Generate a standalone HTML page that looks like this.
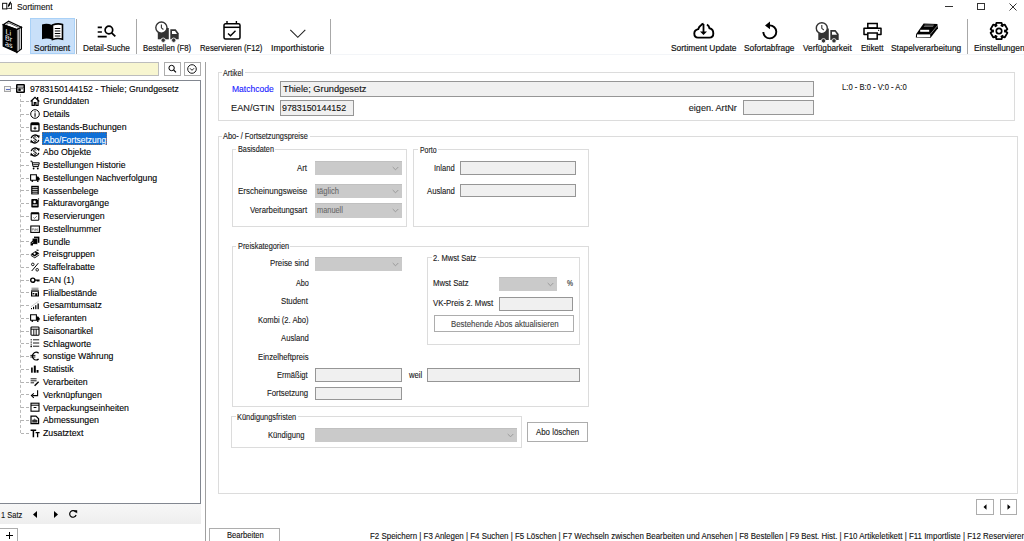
<!DOCTYPE html>
<html><head><meta charset="utf-8">
<style>
*{margin:0;padding:0;box-sizing:border-box}
html,body{width:1024px;height:541px;overflow:hidden;background:#fff}
body{position:relative;font-family:"Liberation Sans",sans-serif;color:#000}
.a{position:absolute}
.t{position:absolute;white-space:nowrap;line-height:1;-webkit-text-stroke:0.12px currentColor}
.sep{position:absolute;width:1px;background:#a8a8a8}
.gb{position:absolute;border:1px solid #dcdcdc}
.lg{position:absolute;background:#fff;white-space:nowrap;line-height:1;padding:0 1px;font-size:8.4px;letter-spacing:-0.35px}
.tb{position:absolute;background:#f0f0f0;border:1px solid #969696}
.cb{position:absolute;background:#cacaca;border-top:1px solid #c0c0c0}
.cb svg{position:absolute;right:3px;top:50%;margin-top:-2.5px}
.lb{position:absolute;white-space:nowrap;line-height:1;font-size:8.6px;letter-spacing:-0.3px;color:#1a1a1a}
.r{text-align:right}
.btn{position:absolute;border:1px solid #adadad;background:#fff}
.tl{position:absolute;font-size:8.3px;white-space:nowrap;line-height:1;color:#222}
.tree .it{position:absolute;left:43px;font-size:8.8px;white-space:nowrap;line-height:1;letter-spacing:-0.1px;color:#000}
.ic{position:absolute;left:29.5px;width:10px;height:10px}
.dh{position:absolute;left:21px;width:8px;height:0;border-top:1px dashed #b4b4b4}
</style></head><body>

<!-- title bar -->
<svg class="a" style="left:0;top:0" width="16" height="12" viewBox="0 0 16 12"><rect x="2.6" y="3.3" width="4.2" height="5.6" fill="none" stroke="#111" stroke-width="1"/><path d="M6.8 9.2Q7.3 8.3 8.2 8.4H11.5M11.5 3.2V9.3" fill="none" stroke="#222" stroke-width="0.9"/><path d="M7.9 7.2Q7.7 3.6 10.9 1.2Q11.5 4.9 7.9 7.2Z" fill="#000"/></svg>
<div class="a" style="left:945px;top:6px;width:8px;height:1px;background:#333"></div>
<div class="a" style="left:977px;top:3px;width:8px;height:7px;border:1px solid #333"></div>
<svg class="a" style="left:1009px;top:3px" width="8" height="8" viewBox="0 0 8 8"><path d="M0.5 0.5L7.5 7.5M7.5 0.5L0.5 7.5" stroke="#333" stroke-width="1"/></svg>

<!-- toolbar -->
<svg class="a" style="left:2px;top:20px" width="22" height="34" viewBox="0 0 22 34">
<path d="M1.2 4.7L6.6 1.2L19.4 7.2L14.9 9.6Z" fill="#fff" stroke="#000" stroke-width="1.3"/>
<path d="M4.5 4.3L7 2.9L16.5 7.3" fill="none" stroke="#444" stroke-width="0.9"/>
<path d="M1.2 4.7L14.9 9.6L14.9 32.4L1.2 26.1Z" fill="#000" stroke="#000" stroke-width="1.2"/>
<path d="M14.9 9.6L19.4 7.2L19.4 29L14.9 32.4Z" fill="#fff" stroke="#000" stroke-width="1.2"/>
<path d="M17.2 9.2L17.2 30.2" stroke="#000" stroke-width="0.9"/>
<g transform="matrix(1,0.358,0,1,0,0)" font-family="Liberation Sans" font-size="7.2" fill="#fff" style="-webkit-text-stroke:0.3px #fff">
<text x="3.4" y="12.6">Li</text>
<text x="3" y="18.6">Br</text>
<text x="3" y="24.6">as</text>
</g>
</svg>
<div class="a" style="left:30px;top:18px;width:45px;height:36px;background:#c9e0f9;border:1px solid #a9d1f7"></div>
<svg class="a" style="left:41px;top:23px" width="23" height="18" viewBox="0 0 23 18">
<path d="M1 1.5Q6 0 11 2L11 16.5Q6 14.8 1 16.2Z" fill="#000"/>
<path d="M11.5 2Q16.5 0 21.5 1.5L21.5 16.2Q16.5 14.8 11.5 16.5Z" fill="#fff" stroke="#000" stroke-width="1.6"/>
<path d="M13.8 5.5h5.5M13.8 8h5.5M13.8 10.5h5.5M13.8 13h5.5" stroke="#000" stroke-width="1.2"/>
</svg>
<div class="sep" style="left:76px;top:19px;height:35px"></div>

<svg class="a" style="left:96px;top:24px" width="22" height="15" viewBox="0 0 22 15">
<path d="M1.7 3.3h4.2M1.7 8h4.2M1.7 12.7h9" stroke="#000" stroke-width="1.7"/>
<circle cx="12.9" cy="6" r="3.8" fill="none" stroke="#000" stroke-width="1.7"/>
<path d="M15.6 8.8L19.3 12.4" stroke="#000" stroke-width="1.8"/>
</svg>
<div class="sep" style="left:136px;top:19px;height:35px"></div>

<svg class="a" style="left:154px;top:20px" width="28" height="24" viewBox="0 0 28 24">
<rect x="3.8" y="8" width="11" height="11.3" fill="#333"/>
<path d="M16.3 9.3h5.4l3 4v6h-8.4z" fill="#333"/>
<path d="M18 11h3l2 3h-5z" fill="#fff"/>
<circle cx="7.4" cy="7.6" r="5.6" fill="#fff" stroke="#333" stroke-width="1.4"/>
<path d="M7.4 4.5v3.3l2 1.7" fill="none" stroke="#333" stroke-width="1.1"/>
<circle cx="9.2" cy="20.2" r="2.2" fill="#333" stroke="#fff" stroke-width="0.8"/>
<circle cx="19.7" cy="20.2" r="2.2" fill="#333" stroke="#fff" stroke-width="0.8"/>
</svg>

<svg class="a" style="left:222px;top:20px" width="20" height="21" viewBox="0 0 20 21">
<rect x="2" y="3.8" width="16" height="15.3" rx="1.5" fill="none" stroke="#000" stroke-width="1.5"/>
<path d="M2 7.3h16" stroke="#000" stroke-width="1.5"/>
<path d="M5 1v3M14.4 1v3" stroke="#000" stroke-width="1.4"/>
<path d="M6 13.5l2.5 2.2l5-5" fill="none" stroke="#000" stroke-width="1.4"/>
</svg>

<svg class="a" style="left:289px;top:28px" width="18" height="11" viewBox="0 0 18 11">
<path d="M1.3 1.8L8.8 9.3L16.3 1.8" fill="none" stroke="#222" stroke-width="1.1"/>
</svg>
<div class="sep" style="left:330px;top:19px;height:35px"></div>

<svg class="a" style="left:692px;top:22px" width="24" height="18" viewBox="0 0 24 18">
<path d="M9 3.5Q10 1.8 11.5 1.8L11.5 1.8 M15 2.5Q17.2 4 17.5 6.3Q21.3 7 21.3 11.5Q21.3 15.6 17.5 15.6L6 15.6Q2.3 15.6 2.3 11.5Q2.3 7.8 6.3 7.1Q7 4.5 9 3.2" fill="none" stroke="#000" stroke-width="1.9"/>
<path d="M11.5 2v9" stroke="#000" stroke-width="1.8"/>
<path d="M8 9.5l3.5 3.5l3.5-3.5z" fill="#000"/>
</svg>

<svg class="a" style="left:760px;top:20px" width="20" height="21" viewBox="0 0 20 21">
<path d="M3.3 12A6.5 6.5 0 1 0 9.7 5.4L8.5 5.4" fill="none" stroke="#000" stroke-width="1.9"/>
<path d="M5 5.4L10 1.5L10 9.3Z" fill="#000"/>
</svg>

<svg class="a" style="left:814px;top:20px" width="28" height="24" viewBox="0 0 28 24">
<rect x="4.3" y="8.5" width="10.5" height="11.5" fill="#333"/>
<path d="M16.3 10h5.2l3.2 4v6h-8.4z" fill="#333"/>
<path d="M18 11.7h3l2 3h-5z" fill="#fff"/>
<circle cx="7.8" cy="8.2" r="5.5" fill="#fff" stroke="#333" stroke-width="1.4"/>
<path d="M7.8 5v3.3l2 1.7" fill="none" stroke="#333" stroke-width="1.1"/>
<circle cx="9.5" cy="20.8" r="2.2" fill="#333" stroke="#fff" stroke-width="0.8"/>
<circle cx="20" cy="20.8" r="2.2" fill="#333" stroke="#fff" stroke-width="0.8"/>
</svg>

<svg class="a" style="left:862px;top:22px" width="21" height="18" viewBox="0 0 21 18">
<rect x="5.8" y="1.5" width="9.4" height="4.5" fill="none" stroke="#000" stroke-width="1.5"/>
<path d="M5.5 12.6H2V6.3h17v6.3h-3.5" fill="none" stroke="#000" stroke-width="1.5" stroke-linejoin="round"/>
<rect x="5.8" y="11" width="9.4" height="6" fill="#fff" stroke="#000" stroke-width="1.5"/>
<rect x="16" y="7.8" width="1.2" height="1" fill="#000"/>
</svg>

<svg class="a" style="left:915px;top:22px" width="24" height="17" viewBox="0 0 24 17">
<path d="M0.8 15.6L1.2 12L8.6 1.6L22.4 2L23 6.2L15.6 15.8Z" fill="#000"/>
<rect x="2" y="12.4" width="13.2" height="2.7" fill="#fff"/>
<path d="M5.2 7.8H14.2V9.8H5.2Z" fill="#fff"/>
<path d="M9.6 3.1h9.2M8.9 4.4h9.2" stroke="#9a9a9a" stroke-width="0.7"/>
<path d="M15.3 12.2L22.6 3.5" stroke="#fff" stroke-width="0.5"/>
</svg>
<div class="sep" style="left:967px;top:19px;height:35px"></div>

<svg class="a" style="left:989px;top:21px" width="20" height="20" viewBox="-10 -10 20 20"><path d="M-3.58 -4.81 L-2.54 -8.22 L2.54 -8.22 L3.58 -4.81 L2.38 -5.51 L5.84 -6.31 L8.39 -1.91 L5.96 0.70 L5.96 -0.70 L8.39 1.91 L5.84 6.31 L2.38 5.51 L3.58 4.81 L2.54 8.22 L-2.54 8.22 L-3.58 4.81 L-2.38 5.51 L-5.84 6.31 L-8.39 1.91 L-5.96 -0.70 L-5.96 0.70 L-8.39 -1.91 L-5.84 -6.31 L-2.38 -5.51Z" fill="none" stroke="#000" stroke-width="1.8" stroke-linejoin="round"/><circle cx="0" cy="0" r="2.7" fill="none" stroke="#000" stroke-width="1.7"/></svg>
<div class="a" style="left:0;top:54px;width:1024px;height:1px;background:#f3f5f8"></div>

<div class="t" style="left:16.70px;top:2.55px;font-size:9.0px;color:#111;transform:scaleX(0.9228);transform-origin:0 0;">Sortiment</div>
<div class="t" style="left:34.00px;top:43.52px;font-size:8.8px;color:#111;transform:scaleX(0.9607);transform-origin:0 0;-webkit-text-stroke:0.18px #111;">Sortiment</div>
<div class="t" style="left:83.30px;top:43.52px;font-size:8.8px;color:#111;transform:scaleX(0.9312);transform-origin:0 0;-webkit-text-stroke:0.18px #111;">Detail-Suche</div>
<div class="t" style="left:143.40px;top:43.52px;font-size:8.8px;color:#111;transform:scaleX(0.8791);transform-origin:0 0;-webkit-text-stroke:0.18px #111;">Bestellen (F8)</div>
<div class="t" style="left:200.00px;top:43.52px;font-size:8.8px;color:#111;transform:scaleX(0.8808);transform-origin:0 0;-webkit-text-stroke:0.18px #111;">Reservieren (F12)</div>
<div class="t" style="left:270.90px;top:43.52px;font-size:8.8px;color:#111;transform:scaleX(0.9945);transform-origin:0 0;-webkit-text-stroke:0.18px #111;">Importhistorie</div>
<div class="t" style="left:670.50px;top:43.52px;font-size:8.8px;color:#111;transform:scaleX(0.9568);transform-origin:0 0;-webkit-text-stroke:0.18px #111;">Sortiment Update</div>
<div class="t" style="left:744.30px;top:43.52px;font-size:8.8px;color:#111;transform:scaleX(0.9473);transform-origin:0 0;-webkit-text-stroke:0.18px #111;">Sofortabfrage</div>
<div class="t" style="left:803.00px;top:43.52px;font-size:8.8px;color:#111;transform:scaleX(0.9391);transform-origin:0 0;-webkit-text-stroke:0.18px #111;">Verfügbarkeit</div>
<div class="t" style="left:860.80px;top:43.52px;font-size:8.8px;color:#111;transform:scaleX(0.9160);transform-origin:0 0;-webkit-text-stroke:0.18px #111;">Etikett</div>
<div class="t" style="left:891.10px;top:43.52px;font-size:8.8px;color:#111;transform:scaleX(0.9506);transform-origin:0 0;-webkit-text-stroke:0.18px #111;">Stapelverarbeitung</div>
<div class="t" style="left:973.90px;top:43.52px;font-size:8.8px;color:#111;transform:scaleX(0.9579);transform-origin:0 0;-webkit-text-stroke:0.18px #111;">Einstellungen</div>
<!-- left panel -->
<div class="a" style="left:-2px;top:62px;width:161px;height:14px;background:#f8f6d0;border:1px solid #bdbdbd;border-left:none"></div>
<div class="a" style="left:164px;top:62px;width:17px;height:14px;background:#fff;border:1px solid #adadad"></div>
<svg class="a" style="left:167px;top:64px" width="11" height="10" viewBox="0 0 11 10"><circle cx="4.6" cy="4" r="2.7" fill="none" stroke="#000" stroke-width="1"/><path d="M6.6 6l2.4 2.4" stroke="#000" stroke-width="1.1"/></svg>
<div class="a" style="left:183.5px;top:62px;width:17px;height:14px;background:#fff;border:1px solid #adadad"></div>
<svg class="a" style="left:186px;top:63px" width="12" height="12" viewBox="0 0 12 12"><circle cx="6" cy="6" r="4.3" fill="none" stroke="#000" stroke-width="0.9"/><path d="M4 5.3l2 2l2-2" fill="none" stroke="#000" stroke-width="0.9"/></svg>
<div class="a" style="left:-1px;top:80px;width:202px;height:424px;border:1px solid #828790;background:#fff"></div>
<div class="a" style="left:4px;top:86px;width:7px;height:6px;border:1px solid #a5a5a5;background:linear-gradient(#fafafa,#e8e8e8)"></div><div class="a" style="left:5.5px;top:88.5px;width:4px;height:1px;background:#5b6fc0"></div>
<div class="a" style="left:11px;top:88px;width:5px;height:0;border-top:1px dashed #c0c0c0"></div>
<svg class="a" style="left:16px;top:83.5px" width="9" height="9" viewBox="0 0 9 9"><rect x="0" y="0" width="9" height="9" rx="1.2" fill="#000"/><rect x="1.5" y="1.5" width="6" height="1.2" fill="#fff"/><rect x="1.5" y="3.5" width="6" height="4" fill="#fff"/><rect x="2.3" y="4.3" width="2.5" height="2.6" fill="#000"/><rect x="5.3" y="4.3" width="1.5" height="1" fill="#000"/></svg>
<div class="t" style="left:29.80px;top:84.11px;font-size:9.4px;color:#000;transform:scaleX(0.9276);transform-origin:0 0;">9783150144152 - Thiele; Grundgesetz</div>
<div class="a" style="left:20px;top:94px;width:0;height:339px;border-left:1px dashed #bcbcbc"></div>
<div class="dh" style="top:101.0px"></div>
<svg class="ic" style="top:96.0px" viewBox="0 0 10 10"><path d="M0.7 5.5L5 1.4L9.3 5.5" stroke="#000" stroke-width="1.3" fill="none"/><path d="M2.1 4.6V9.4H4.3V6.6H5.9V9.4H8.1V4.6" stroke="#000" stroke-width="1.2" fill="none"/><rect x="7" y="1" width="1.3" height="3.2" fill="#000"/></svg>
<div class="t" style="left:43.10px;top:96.41px;font-size:9.4px;color:#000;transform:scaleX(0.9320);transform-origin:0 0;">Grunddaten</div>
<div class="dh" style="top:113.8px"></div>
<svg class="ic" style="top:108.8px" viewBox="0 0 10 10"><circle cx="5" cy="5" r="4.3" fill="none" stroke="#000" stroke-width="1"/><rect x="4.5" y="4.2" width="1.1" height="3.6" fill="#000"/><rect x="4.5" y="2.3" width="1.1" height="1.1" fill="#000"/></svg>
<div class="t" style="left:43.10px;top:109.16px;font-size:9.4px;color:#000;transform:scaleX(0.9320);transform-origin:0 0;">Details</div>
<div class="dh" style="top:126.5px"></div>
<svg class="ic" style="top:121.5px" viewBox="0 0 10 10"><rect x="1" y="1" width="8" height="8.2" rx="1" fill="none" stroke="#000" stroke-width="1.3"/><rect x="1" y="1" width="8" height="2.2" fill="#000"/><path d="M3.5 6.2h3M5 4.7v3" stroke="#000" stroke-width="1"/></svg>
<div class="t" style="left:43.10px;top:121.92px;font-size:9.4px;color:#000;transform:scaleX(0.9320);transform-origin:0 0;">Bestands-Buchungen</div>
<div class="dh" style="top:139.3px"></div>
<svg class="ic" style="top:134.3px" viewBox="0 0 10 10"><path d="M1.2 4.2A4 4 0 0 1 8.3 2.6" fill="none" stroke="#000" stroke-width="1.3"/><path d="M8.8 5.8A4 4 0 0 1 1.7 7.4" fill="none" stroke="#000" stroke-width="1.3"/><path d="M6.6 1.2L9.8 1.4L9 4.4Z" fill="#000"/><path d="M3.4 8.8L0.2 8.6L1 5.6Z" fill="#000"/><path d="M6.3 3.3Q5.5 2.6 4.6 2.8Q3.4 3.1 3.6 4.2Q3.8 5 5 5.1Q6.4 5.3 6.4 6.3Q6.3 7.4 5 7.3Q4 7.2 3.5 6.6" fill="none" stroke="#000" stroke-width="1"/></svg>
<div class="a" style="left:42px;top:131.9px;width:65px;height:13px;background:#0f6fd6;border:1px dotted #8a6f60"></div>
<div class="t" style="left:43.50px;top:134.67px;font-size:9.4px;color:#fff;transform:scaleX(0.9041);transform-origin:0 0;">Abo/Fortsetzung</div>
<div class="dh" style="top:152.0px"></div>
<svg class="ic" style="top:147.0px" viewBox="0 0 10 10"><path d="M1.2 4.2A4 4 0 0 1 8.3 2.6" fill="none" stroke="#000" stroke-width="1.3"/><path d="M8.8 5.8A4 4 0 0 1 1.7 7.4" fill="none" stroke="#000" stroke-width="1.3"/><path d="M6.6 1.2L9.8 1.4L9 4.4Z" fill="#000"/><path d="M3.4 8.8L0.2 8.6L1 5.6Z" fill="#000"/><path d="M6.3 3.3Q5.5 2.6 4.6 2.8Q3.4 3.1 3.6 4.2Q3.8 5 5 5.1Q6.4 5.3 6.4 6.3Q6.3 7.4 5 7.3Q4 7.2 3.5 6.6" fill="none" stroke="#000" stroke-width="1"/></svg>
<div class="t" style="left:43.10px;top:147.43px;font-size:9.4px;color:#000;transform:scaleX(0.9320);transform-origin:0 0;">Abo Objekte</div>
<div class="dh" style="top:164.8px"></div>
<svg class="ic" style="top:159.8px" viewBox="0 0 10 10"><path d="M0.5 1.2H2L3 6.6H8.4L9.3 2.8H2.4" fill="none" stroke="#000" stroke-width="1"/><path d="M3.2 4.7H8.6" stroke="#000" stroke-width="0.9"/><circle cx="3.6" cy="8.5" r="0.9" fill="#000"/><circle cx="7.8" cy="8.5" r="0.9" fill="#000"/></svg>
<div class="t" style="left:43.10px;top:160.18px;font-size:9.4px;color:#000;transform:scaleX(0.9320);transform-origin:0 0;">Bestellungen Historie</div>
<div class="dh" style="top:177.5px"></div>
<svg class="ic" style="top:172.5px" viewBox="0 0 10 10"><path d="M0.6 1.8H6.4V7.2H0.6Z" fill="none" stroke="#000" stroke-width="1.1"/><path d="M6.4 3.4H8.2L9.6 5.3V7.2H6.4Z" fill="#000"/><circle cx="2.3" cy="8" r="0.9" fill="#000"/><circle cx="7.8" cy="8" r="0.9" fill="#000"/></svg>
<div class="t" style="left:43.10px;top:172.93px;font-size:9.4px;color:#000;transform:scaleX(0.9320);transform-origin:0 0;">Bestellungen Nachverfolgung</div>
<div class="dh" style="top:190.3px"></div>
<svg class="ic" style="top:185.3px" viewBox="0 0 10 10"><rect x="1.2" y="0.8" width="7.6" height="8.6" fill="#000"/><path d="M2.4 2.7h5.2M2.4 4.5h5.2M2.4 6.3h5.2M2.4 8.1h5.2" stroke="#fff" stroke-width="0.8"/></svg>
<div class="t" style="left:43.10px;top:185.69px;font-size:9.4px;color:#000;transform:scaleX(0.9320);transform-origin:0 0;">Kassenbelege</div>
<div class="dh" style="top:203.0px"></div>
<svg class="ic" style="top:198.0px" viewBox="0 0 10 10"><rect x="1.3" y="1" width="7.4" height="8.6" rx="0.8" fill="#000"/><circle cx="4.6" cy="3.9" r="1.3" fill="#fff"/><rect x="2.7" y="6.4" width="4.6" height="1.2" fill="#fff"/><rect x="7.4" y="0" width="2" height="2" fill="#fff"/><rect x="7.9" y="0.4" width="1.2" height="1.2" fill="#000"/></svg>
<div class="t" style="left:43.10px;top:198.44px;font-size:9.4px;color:#000;transform:scaleX(0.9320);transform-origin:0 0;">Fakturavorgänge</div>
<div class="dh" style="top:215.8px"></div>
<svg class="ic" style="top:210.8px" viewBox="0 0 10 10"><rect x="1.2" y="1.8" width="7.6" height="7.4" rx="0.8" fill="none" stroke="#000" stroke-width="1.1"/><rect x="1.2" y="1.8" width="7.6" height="1.5" fill="#000"/><path d="M3.4 6.4l1.2 1l2.3-2.3" fill="none" stroke="#555" stroke-width="0.8"/></svg>
<div class="t" style="left:43.10px;top:211.20px;font-size:9.4px;color:#000;transform:scaleX(0.9320);transform-origin:0 0;">Reservierungen</div>
<div class="dh" style="top:228.5px"></div>
<svg class="ic" style="top:223.5px" viewBox="0 0 10 10"><rect x="0.8" y="2" width="8.6" height="6.4" fill="none" stroke="#000" stroke-width="1.1"/><path d="M2.3 4.3v2.2M3.3 4.3l1 2.2M5.2 4.3v2.2l1-1l1 1V4.3" fill="none" stroke="#333" stroke-width="0.6"/></svg>
<div class="t" style="left:43.10px;top:223.95px;font-size:9.4px;color:#000;transform:scaleX(0.9320);transform-origin:0 0;">Bestellnummer</div>
<div class="dh" style="top:241.3px"></div>
<svg class="ic" style="top:236.3px" viewBox="0 0 10 10"><rect x="4" y="0.6" width="5.4" height="6.2" fill="#000"/><rect x="2.2" y="2.2" width="5.4" height="6" fill="#000" stroke="#fff" stroke-width="0.5"/><path d="M0.6 6.3L3 4.4V9.4H0.6Z" fill="#000"/><path d="M1.6 7.2l1.8-1.2" stroke="#fff" stroke-width="0.6"/></svg>
<div class="t" style="left:43.10px;top:236.70px;font-size:9.4px;color:#000;transform:scaleX(0.9320);transform-origin:0 0;">Bundle</div>
<div class="dh" style="top:254.0px"></div>
<svg class="ic" style="top:249.0px" viewBox="0 0 10 10"><path d="M0.6 5.2L5.5 2L9.4 4.2L4.8 7.5Z" fill="#000"/><path d="M0.8 6.3L4.8 8.8L9.2 5.8" fill="none" stroke="#000" stroke-width="0.9"/><circle cx="4.6" cy="4.6" r="1.1" fill="#fff"/><path d="M6.5 1L8.5 1.3" stroke="#000" stroke-width="1.2"/></svg>
<div class="t" style="left:43.10px;top:249.46px;font-size:9.4px;color:#000;transform:scaleX(0.9320);transform-origin:0 0;">Preisgruppen</div>
<div class="dh" style="top:266.8px"></div>
<svg class="ic" style="top:261.8px" viewBox="0 0 10 10"><circle cx="2.8" cy="2.4" r="1.3" fill="none" stroke="#000" stroke-width="0.9"/><circle cx="7.2" cy="7.8" r="1.3" fill="none" stroke="#000" stroke-width="0.9"/><path d="M8.3 1.2L1.7 9" stroke="#000" stroke-width="1"/></svg>
<div class="t" style="left:43.10px;top:262.21px;font-size:9.4px;color:#000;transform:scaleX(0.9320);transform-origin:0 0;">Staffelrabatte</div>
<div class="dh" style="top:279.6px"></div>
<svg class="ic" style="top:274.6px" viewBox="0 0 10 10"><circle cx="2.8" cy="5.2" r="2.1" fill="none" stroke="#000" stroke-width="1.4"/><path d="M4.8 5.2H9.6M7.4 5.2V6.6M8.8 5.2V6.6" stroke="#000" stroke-width="1.3"/></svg>
<div class="t" style="left:43.10px;top:274.97px;font-size:9.4px;color:#000;transform:scaleX(0.9320);transform-origin:0 0;">EAN (1)</div>
<div class="dh" style="top:292.3px"></div>
<svg class="ic" style="top:287.3px" viewBox="0 0 10 10"><path d="M1.5 1.2h7M1.5 2.4h7" stroke="#555" stroke-width="0.7"/><rect x="1" y="3.4" width="8" height="1.3" fill="#000"/><path d="M1.6 4.7V9H8.4V4.7" fill="none" stroke="#000" stroke-width="1.2"/><rect x="5.2" y="6.2" width="2" height="2.8" fill="#000"/><rect x="2.6" y="6" width="1.8" height="1.4" fill="#000"/></svg>
<div class="t" style="left:43.10px;top:287.72px;font-size:9.4px;color:#000;transform:scaleX(0.9320);transform-origin:0 0;">Filialbestände</div>
<div class="dh" style="top:305.1px"></div>
<svg class="ic" style="top:300.1px" viewBox="0 0 10 10"><rect x="1" y="8" width="1" height="1.2" fill="#000"/><rect x="3" y="6.8" width="1.1" height="2.4" fill="#000"/><rect x="5.2" y="5.2" width="1.2" height="4" fill="#000"/><rect x="7.5" y="3.5" width="1.3" height="5.7" fill="#000"/><path d="M0.8 6.8L8.6 1.2" stroke="#999" stroke-width="0.5"/></svg>
<div class="t" style="left:43.10px;top:300.47px;font-size:9.4px;color:#000;transform:scaleX(0.9320);transform-origin:0 0;">Gesamtumsatz</div>
<div class="dh" style="top:317.8px"></div>
<svg class="ic" style="top:312.8px" viewBox="0 0 10 10"><path d="M0.6 1.8H6.4V7.2H0.6Z" fill="none" stroke="#000" stroke-width="1.1"/><path d="M6.4 3.4H8.2L9.6 5.3V7.2H6.4Z" fill="#000"/><circle cx="2.3" cy="8" r="0.9" fill="#000"/><circle cx="7.8" cy="8" r="0.9" fill="#000"/></svg>
<div class="t" style="left:43.10px;top:313.23px;font-size:9.4px;color:#000;transform:scaleX(0.9320);transform-origin:0 0;">Lieferanten</div>
<div class="dh" style="top:330.6px"></div>
<svg class="ic" style="top:325.6px" viewBox="0 0 10 10"><rect x="1" y="1" width="8" height="8.2" rx="0.8" fill="none" stroke="#000" stroke-width="1.1"/><path d="M1 3.2h8M3.8 3.2v6M6.2 3.2v6" stroke="#000" stroke-width="0.9"/></svg>
<div class="t" style="left:43.10px;top:325.98px;font-size:9.4px;color:#000;transform:scaleX(0.9320);transform-origin:0 0;">Saisonartikel</div>
<div class="dh" style="top:343.3px"></div>
<svg class="ic" style="top:338.3px" viewBox="0 0 10 10"><path d="M1.2 1v7.8" stroke="#000" stroke-width="0.9" stroke-dasharray="1 0.6"/><path d="M3 1.8h6.2M3 5h6.2M3 8.2h6.2" stroke="#000" stroke-width="0.9"/><rect x="0.5" y="8" width="1.4" height="1.2" fill="#000"/></svg>
<div class="t" style="left:43.10px;top:338.74px;font-size:9.4px;color:#000;transform:scaleX(0.9320);transform-origin:0 0;">Schlagworte</div>
<div class="dh" style="top:356.1px"></div>
<svg class="ic" style="top:351.1px" viewBox="0 0 10 10"><path d="M8.6 2.2A3.6 3.9 0 1 0 8.6 8" fill="none" stroke="#000" stroke-width="1.2"/><path d="M0.4 4.4h5M0.4 6h5" stroke="#000" stroke-width="0.9"/></svg>
<div class="t" style="left:43.10px;top:351.49px;font-size:9.4px;color:#000;transform:scaleX(0.9320);transform-origin:0 0;">sonstige Währung</div>
<div class="dh" style="top:368.8px"></div>
<svg class="ic" style="top:363.8px" viewBox="0 0 10 10"><rect x="1.1" y="3.5" width="1.6" height="5.2" fill="#000"/><rect x="3.8" y="1.6" width="2" height="7.1" fill="#000"/><rect x="6.6" y="6" width="1.9" height="2.7" fill="#000"/></svg>
<div class="t" style="left:43.10px;top:364.24px;font-size:9.4px;color:#000;transform:scaleX(0.9320);transform-origin:0 0;">Statistik</div>
<div class="dh" style="top:381.6px"></div>
<svg class="ic" style="top:376.6px" viewBox="0 0 10 10"><path d="M0.6 1.8h6M0.6 3.8h6M0.6 5.8h3.5" stroke="#000" stroke-width="0.9"/><path d="M4.6 8.8L8.6 4.8" stroke="#000" stroke-width="1.4"/></svg>
<div class="t" style="left:43.10px;top:377.00px;font-size:9.4px;color:#000;transform:scaleX(0.9320);transform-origin:0 0;">Verarbeiten</div>
<div class="dh" style="top:394.3px"></div>
<svg class="ic" style="top:389.3px" viewBox="0 0 10 10"><path d="M7.6 1.2V6.6H2.4" fill="none" stroke="#000" stroke-width="1.1"/><path d="M3.8 4.4L1.4 6.6L3.8 8.8" fill="none" stroke="#000" stroke-width="1.1"/></svg>
<div class="t" style="left:43.10px;top:389.75px;font-size:9.4px;color:#000;transform:scaleX(0.9320);transform-origin:0 0;">Verknüpfungen</div>
<div class="dh" style="top:407.1px"></div>
<svg class="ic" style="top:402.1px" viewBox="0 0 10 10"><rect x="1" y="1.2" width="8" height="8" fill="none" stroke="#000" stroke-width="1.1"/><path d="M1 3.2h8" stroke="#000" stroke-width="1"/><rect x="3.6" y="5" width="2.8" height="1" fill="#000"/></svg>
<div class="t" style="left:43.10px;top:402.51px;font-size:9.4px;color:#000;transform:scaleX(0.9320);transform-origin:0 0;">Verpackungseinheiten</div>
<div class="dh" style="top:419.8px"></div>
<svg class="ic" style="top:414.8px" viewBox="0 0 10 10"><path d="M1 1.2H6L8.6 3.8V8.6H1Z" fill="none" stroke="#000" stroke-width="1.2"/><rect x="2.2" y="4.8" width="5.2" height="2.8" fill="#333"/><path d="M3.2 4.8L4.6 3.4L6 4.8Z" fill="#333"/></svg>
<div class="t" style="left:43.10px;top:415.26px;font-size:9.4px;color:#000;transform:scaleX(0.9320);transform-origin:0 0;">Abmessungen</div>
<div class="dh" style="top:432.6px"></div>
<svg class="ic" style="top:427.6px" viewBox="0 0 10 10"><path d="M0.6 2.2h5.6M3.4 2.2v7" stroke="#000" stroke-width="1.5"/><path d="M5.6 4.6h4M7.6 4.6v4.6" stroke="#000" stroke-width="1.3"/></svg>
<div class="t" style="left:43.10px;top:428.01px;font-size:9.4px;color:#000;transform:scaleX(0.9320);transform-origin:0 0;">Zusatztext</div>
<div class="a" style="left:0;top:504px;width:201px;height:20px;background:linear-gradient(#f7f7f7,#eeeeee)"></div>
<div class="t" style="left:1.00px;top:510.07px;font-size:9.8px;color:#111;transform:scaleX(0.7641);transform-origin:0 0;">1 Satz</div>
<svg class="a" style="left:32px;top:510px" width="6" height="9" viewBox="0 0 6 9"><path d="M1 4.5L5 1V8Z" fill="#000"/></svg>
<svg class="a" style="left:53px;top:510px" width="6" height="9" viewBox="0 0 6 9"><path d="M5 4.5L1 1V8Z" fill="#000"/></svg>
<svg class="a" style="left:68px;top:509px" width="10" height="10" viewBox="0 0 10 10"><path d="M7.8 3.2A3.3 3.3 0 1 0 8.1 6" fill="none" stroke="#000" stroke-width="1.2"/><path d="M5.8 1.2H9.2V4.6Z" fill="#000"/></svg>
<div class="a" style="left:-1px;top:527.5px;width:19px;height:16px;background:#fff;border:1px solid #adadad"></div>
<div class="a" style="left:6px;top:535px;width:7px;height:1px;background:#000"></div><div class="a" style="left:9px;top:532px;width:1px;height:7px;background:#000"></div>
<div class="a" style="left:204.5px;top:62px;width:1px;height:479px;background:#a0a0a0"></div>
<!-- right panel -->
<div class="gb" style="left:217.5px;top:72.3px;width:797.0px;height:49.0px"></div>
<div class="a" style="left:221.5px;top:70.3px;width:23.1px;height:4px;background:#fff"></div>
<div class="t" style="left:223.00px;top:68.69px;font-size:8.6px;color:#1a1a1a;transform:scaleX(0.8387);transform-origin:0 0;">Artikel</div>
<div class="t" style="left:231.90px;top:84.95px;font-size:9.0px;color:#1a1aff;transform:scaleX(0.9496);transform-origin:0 0;">Matchcode</div>
<div class="tb" style="left:280.0px;top:81.3px;width:534.0px;height:15.4px"></div>
<div class="t" style="left:283.40px;top:85.20px;font-size:9.3px;color:#111;transform:scaleX(0.9956);transform-origin:0 0;">Thiele; Grundgesetz</div>
<div class="t" style="left:230.90px;top:103.27px;font-size:9.8px;color:#1a1a1a;transform:scaleX(0.9374);transform-origin:0 0;">EAN/GTIN</div>
<div class="tb" style="left:280.0px;top:100.3px;width:74.2px;height:15.3px"></div>
<div class="t" style="left:282.40px;top:104.20px;font-size:9.3px;color:#111;transform:scaleX(0.9546);transform-origin:0 0;">9783150144152</div>
<div class="t" style="left:688.75px;top:103.87px;font-size:9.1px;color:#1a1a1a;">eigen. ArtNr</div>
<div class="tb" style="left:743.4px;top:100.2px;width:70.6px;height:15.2px"></div>
<div class="t" style="left:842.10px;top:82.88px;font-size:8.5px;color:#1a1a1a;transform:scaleX(0.8995);transform-origin:0 0;">L:0 - B:0 - V:0 - A:0</div>
<div class="gb" style="left:217.8px;top:135.7px;width:800.0px;height:358.8px"></div>
<div class="a" style="left:221.9px;top:133.7px;width:88.0px;height:4px;background:#fff"></div>
<div class="t" style="left:223.40px;top:131.79px;font-size:8.6px;color:#1a1a1a;transform:scaleX(0.8619);transform-origin:0 0;">Abo- / Fortsetzungspreise</div>
<div class="gb" style="left:231.6px;top:149.0px;width:175.1px;height:78.3px"></div>
<div class="a" style="left:236.1px;top:147.0px;width:39.1px;height:4px;background:#fff"></div>
<div class="t" style="left:237.60px;top:144.99px;font-size:8.6px;color:#1a1a1a;transform:scaleX(0.8446);transform-origin:0 0;">Basisdaten</div>
<div class="t" style="left:296.92px;top:164.45px;font-size:9.0px;color:#1a1a1a;transform:scaleX(0.8650);transform-origin:0 0;">Art</div>
<div class="cb" style="left:314.8px;top:161.3px;width:86.9px;height:14.2px"><svg width="7" height="5" viewBox="0 0 7 5"><path d="M0.7 1L3.5 3.8L6.3 1" fill="none" stroke="#9a9a9a" stroke-width="1"/></svg></div>
<div class="t" style="left:238.00px;top:187.15px;font-size:9.0px;color:#1a1a1a;transform:scaleX(0.8938);transform-origin:0 0;">Erscheinungsweise</div>
<div class="cb" style="left:314.8px;top:183.8px;width:86.9px;height:14.4px"><svg width="7" height="5" viewBox="0 0 7 5"><path d="M0.7 1L3.5 3.8L6.3 1" fill="none" stroke="#9a9a9a" stroke-width="1"/></svg></div>
<div class="t" style="left:316.80px;top:187.05px;font-size:9.0px;color:#6a6a6a;transform:scaleX(0.8420);transform-origin:0 0;">täglich</div>
<div class="t" style="left:249.74px;top:206.05px;font-size:9.0px;color:#1a1a1a;transform:scaleX(0.8650);transform-origin:0 0;">Verarbeitungsart</div>
<div class="cb" style="left:314.8px;top:203.2px;width:86.9px;height:14.4px"><svg width="7" height="5" viewBox="0 0 7 5"><path d="M0.7 1L3.5 3.8L6.3 1" fill="none" stroke="#9a9a9a" stroke-width="1"/></svg></div>
<div class="t" style="left:316.80px;top:206.35px;font-size:9.0px;color:#6a6a6a;transform:scaleX(0.8218);transform-origin:0 0;">manuell</div>
<div class="gb" style="left:413.2px;top:149.1px;width:175.7px;height:78.2px"></div>
<div class="a" style="left:418.1px;top:147.1px;width:19.7px;height:4px;background:#fff"></div>
<div class="t" style="left:419.60px;top:145.79px;font-size:8.6px;color:#1a1a1a;transform:scaleX(0.8044);transform-origin:0 0;">Porto</div>
<div class="t" style="left:433.80px;top:164.25px;font-size:9.0px;color:#1a1a1a;transform:scaleX(0.8443);transform-origin:0 0;">Inland</div>
<div class="tb" style="left:460.2px;top:161.3px;width:115.7px;height:13.6px"></div>
<div class="t" style="left:426.60px;top:187.05px;font-size:9.0px;color:#1a1a1a;transform:scaleX(0.8580);transform-origin:0 0;">Ausland</div>
<div class="tb" style="left:460.2px;top:183.8px;width:115.7px;height:13.7px"></div>
<div class="gb" style="left:231.6px;top:246.3px;width:357.1px;height:160.4px"></div>
<div class="a" style="left:236.0px;top:244.3px;width:54.3px;height:4px;background:#fff"></div>
<div class="t" style="left:237.50px;top:242.29px;font-size:8.6px;color:#1a1a1a;transform:scaleX(0.8560);transform-origin:0 0;">Preiskategorien</div>
<div class="t" style="left:269.70px;top:259.35px;font-size:9.0px;color:#1a1a1a;transform:scaleX(0.8716);transform-origin:0 0;">Preise sind</div>
<div class="cb" style="left:315.0px;top:256.9px;width:86.9px;height:14.4px"><svg width="7" height="5" viewBox="0 0 7 5"><path d="M0.7 1L3.5 3.8L6.3 1" fill="none" stroke="#9a9a9a" stroke-width="1"/></svg></div>
<div class="t" style="left:295.60px;top:278.95px;font-size:9.0px;color:#1a1a1a;transform:scaleX(0.8058);transform-origin:0 0;">Abo</div>
<div class="t" style="left:281.23px;top:297.45px;font-size:9.0px;color:#1a1a1a;transform:scaleX(0.8650);transform-origin:0 0;">Student</div>
<div class="t" style="left:257.50px;top:316.05px;font-size:9.0px;color:#1a1a1a;transform:scaleX(0.8496);transform-origin:0 0;">Kombi (2. Abo)</div>
<div class="t" style="left:280.70px;top:334.35px;font-size:9.0px;color:#1a1a1a;transform:scaleX(0.8549);transform-origin:0 0;">Ausland</div>
<div class="t" style="left:257.50px;top:352.65px;font-size:9.0px;color:#1a1a1a;transform:scaleX(0.8567);transform-origin:0 0;">Einzelheftpreis</div>
<div class="t" style="left:277.40px;top:371.35px;font-size:9.0px;color:#1a1a1a;transform:scaleX(0.8404);transform-origin:0 0;">Ermäßigt</div>
<div class="t" style="left:267.40px;top:389.25px;font-size:9.0px;color:#1a1a1a;transform:scaleX(0.8650);transform-origin:0 0;">Fortsetzung</div>
<div class="tb" style="left:315.0px;top:368.4px;width:86.8px;height:13.2px"></div>
<div class="tb" style="left:315.0px;top:386.5px;width:86.8px;height:13.7px"></div>
<div class="t" style="left:408.75px;top:371.05px;font-size:9.0px;color:#1a1a1a;transform:scaleX(0.8543);transform-origin:0 0;">weil</div>
<div class="tb" style="left:427.4px;top:368.0px;width:152.5px;height:14.0px"></div>
<div class="gb" style="left:427.4px;top:257.0px;width:152.9px;height:88.3px"></div>
<div class="a" style="left:431.8px;top:255.0px;width:46.1px;height:4px;background:#fff"></div>
<div class="t" style="left:433.30px;top:253.69px;font-size:8.6px;color:#1a1a1a;transform:scaleX(0.8816);transform-origin:0 0;">2. Mwst Satz</div>
<div class="t" style="left:433.00px;top:278.55px;font-size:9.0px;color:#1a1a1a;transform:scaleX(0.8570);transform-origin:0 0;">Mwst Satz</div>
<div class="cb" style="left:499.1px;top:276.8px;width:57.7px;height:14.2px"><svg width="7" height="5" viewBox="0 0 7 5"><path d="M0.7 1L3.5 3.8L6.3 1" fill="none" stroke="#9a9a9a" stroke-width="1"/></svg></div>
<div class="t" style="left:567.00px;top:278.75px;font-size:9.0px;color:#1a1a1a;transform:scaleX(0.7500);transform-origin:0 0;">%</div>
<div class="t" style="left:433.00px;top:299.25px;font-size:9.0px;color:#1a1a1a;transform:scaleX(0.8718);transform-origin:0 0;">VK-Preis 2. Mwst</div>
<div class="tb" style="left:499.1px;top:297.1px;width:74.3px;height:13.9px"></div>
<div class="btn" style="left:433.5px;top:315.0px;width:140.3px;height:16.7px"></div>
<div class="t" style="left:450.50px;top:319.65px;font-size:9.0px;color:#444;transform:scaleX(0.8712);transform-origin:0 0;">Bestehende Abos aktualisieren</div>
<div class="gb" style="left:231.3px;top:416.3px;width:291.1px;height:32.2px"></div>
<div class="a" style="left:235.9px;top:414.3px;width:62.3px;height:4px;background:#fff"></div>
<div class="t" style="left:237.40px;top:412.99px;font-size:8.6px;color:#1a1a1a;transform:scaleX(0.8592);transform-origin:0 0;">Kündigungsfristen</div>
<div class="t" style="left:267.50px;top:430.95px;font-size:9.0px;color:#1a1a1a;transform:scaleX(0.8482);transform-origin:0 0;">Kündigung</div>
<div class="cb" style="left:314.6px;top:427.7px;width:202.3px;height:14.2px"><svg width="7" height="5" viewBox="0 0 7 5"><path d="M0.7 1L3.5 3.8L6.3 1" fill="none" stroke="#9a9a9a" stroke-width="1"/></svg></div>
<div class="btn" style="left:527.1px;top:422.3px;width:60.8px;height:20.0px"></div>
<div class="t" style="left:536.40px;top:428.05px;font-size:9.0px;color:#222;transform:scaleX(0.8722);transform-origin:0 0;">Abo löschen</div>
<div class="btn" style="left:976.4px;top:499.1px;width:17.2px;height:15.5px"></div><svg class="a" style="left:982px;top:503px" width="6" height="8" viewBox="0 0 6 8"><path d="M1.5 4L4.5 1.2V6.8Z" fill="#000"/></svg>
<div class="btn" style="left:1000.1px;top:499.1px;width:16.7px;height:15.5px"></div><svg class="a" style="left:1005.5px;top:503px" width="6" height="8" viewBox="0 0 6 8"><path d="M4.5 4L1.5 1.2V6.8Z" fill="#000"/></svg>
<div class="btn" style="left:209.3px;top:527.5px;width:70.3px;height:20px"></div>
<div class="t" style="left:226.70px;top:531.35px;font-size:9.0px;color:#111;transform:scaleX(0.8455);transform-origin:0 0;">Bearbeiten</div>
<div class="t" style="left:369.60px;top:530.52px;font-size:9.5px;color:#111;transform:scaleX(0.8344);transform-origin:0 0;">F2 Speichern | F3 Anlegen | F4 Suchen | F5 Löschen | F7 Wechseln zwischen Bearbeiten und Ansehen | F8 Bestellen | F9 Best. Hist. | F10 Artikeletikett | F11 Importliste | F12 Reservieren</div>
</body></html>
